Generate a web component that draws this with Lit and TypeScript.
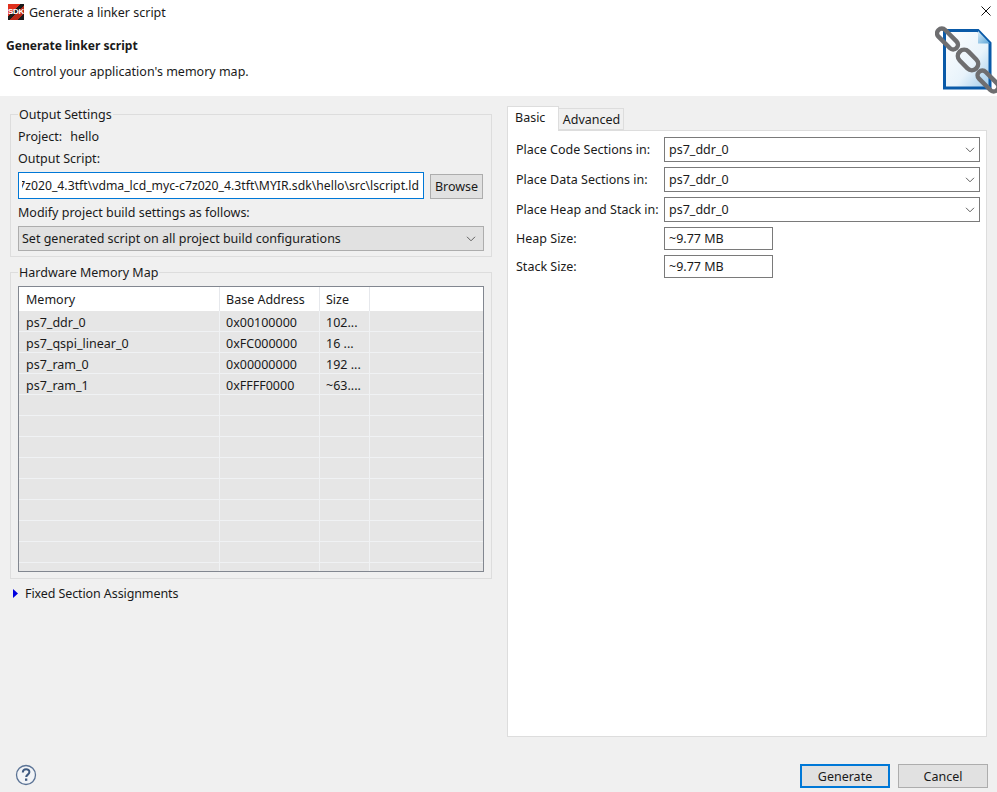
import { LitElement, html, css, svg } from 'lit';
import { customElement } from 'lit/decorators.js';

const MEMORY = [
  ['ps7_ddr_0', '0x00100000', '102...'],
  ['ps7_qspi_linear_0', '0xFC000000', '16 ...'],
  ['ps7_ram_0', '0x00000000', '192 ...'],
  ['ps7_ram_1', '0xFFFF0000', '~63....'],
  ['', '', ''], ['', '', ''], ['', '', ''], ['', '', ''],
  ['', '', ''], ['', '', ''], ['', '', ''], ['', '', ''], ['', '', ''],
];

const chevron = svg`<svg class="chev" width="10" height="6" viewBox="0 0 10 6" fill="none" stroke="#606060" stroke-width="1"><path d="M1 .8l4 4 4-4"/></svg>`;

const link = (cx: number, cy: number, w: number, h: number) => svg`<rect x=${cx - w / 2} y=${cy - h / 2} width=${w} height=${h} rx=${h / 2} transform="rotate(45 ${cx} ${cy})" fill="none" stroke="#6e6e70" stroke-width="4.500"/>`;

@customElement('app-root')
export class AppRoot extends LitElement {
  static styles = css`
    :host {
      display: block;
      width: 997px;
      height: 792px;
      overflow: hidden;
      background: #f0f0f0;
      color: #1a1a1a;
      font: 12.5px/17px "Noto Sans", "Open Sans", sans-serif;
    }

    .top { background: #fff; height: 96px; display: flex; flex-direction: column; position: relative; }

    .titlebar { display: flex; align-items: center; height: 24px; padding-left: 8px; gap: 5px; }
    .sdk {
      width: 16px; height: 16px;
      background: linear-gradient(135deg, #e0301c 0 40%, #1a1a1a 40% 55%, #b82818 55% 80%, #1a1a1a 80%);
      color: #fff; font: bold 8px/16px "Liberation Sans", sans-serif; letter-spacing: -0.3px; text-align: center; overflow: hidden;
    }
    .close { position: absolute; right: 6px; top: 6px; }

    .heading { font-weight: 700; font-size: 12.1px; margin: 13px 0 0 6px; }
    .sub { margin: 9px 0 0 13px; }
    .logo { position: absolute; left: 935px; top: 25px; }

    .body { display: flex; height: 668px; box-sizing: border-box; padding: 10px 10px 0; gap: 15px; }
    .left { width: 482px; flex: none; }
    .right { width: 480px; flex: none; display: flex; flex-direction: column; }

    fieldset { margin: 0; padding: 0 7px; border: 1px solid #dddddd; min-width: 0; box-sizing: border-box; }
    legend { padding: 0 1px; margin-left: 0; line-height: 17px; }
    .output { height: 151px; }
    .hw { height: 315px; margin-top: 7px; }

    .project { display: flex; gap: 8px; margin-top: 5px; }
    .lbl { margin-top: 5px; }
    .script-row { display: flex; gap: 6px; margin-top: 5px; align-items: center; }
    .input {
      box-sizing: border-box; width: 406px; height: 27px; background: #fff; font-size: 12.22px;
      border: 1px solid #0078d7; line-height: 25px; padding: 0 4px 0 3px;
    }
    .input-clip { display: flex; justify-content: flex-end; white-space: nowrap; overflow: hidden; }
    .input-clip span { flex: none; }
    .btn { box-sizing: border-box; background: #e1e1e1; border: 1px solid #adadad; text-align: center; }
    .browse { width: 53px; height: 25px; line-height: 23px; margin-top: 1px; }
    .combo-gray {
      box-sizing: border-box; height: 25px; margin-top: 5px; padding: 0 3px; background: #e1e1e1;
      border: 1px solid #adadad; line-height: 23px; display: flex; justify-content: space-between; align-items: center;
    }
    .chev { margin-right: 4px; flex: none; }

    .table {
      box-sizing: border-box; height: 286px; margin-top: 5px; background: #e6e6e6; overflow: hidden;
      border: 1px solid #828790;
    }
    .tr { display: grid; grid-template-columns: 201px 100px 50px 1fr; height: 21px; border-bottom: 1px solid #f0f2f4; box-sizing: border-box; line-height: 23px; }
    .tr.head { height: 24px; background: #fff; border: none; line-height: 25px; }
    .tr > div { padding-left: 7px; border-right: 1px solid #f0f2f4; white-space: nowrap; overflow: hidden; }
    .tr > div + div { padding-left: 6px; }
    .tr > div:last-child { border-right: none; }
    .tr.head > div { border-right-color: #e6e8ec; }

    .fixed { display: flex; align-items: center; gap: 7px; margin: 6px 0 0 3px; letter-spacing: -0.1px; }

    .tabs { display: flex; height: 24px; align-items: flex-end; position: relative; z-index: 1; }
    .tab { box-sizing: border-box; }
    .tab.on { width: 52px; height: 25px; background: #fff; border: 1px solid #dddddd; border-bottom: none; line-height: 22px; margin-bottom: -1px; padding-left: 7px; }
    .tab.off { width: 65px; height: 22px; background: #f0f0f0; border: 1px solid #dddddd; border-left: none; line-height: 21px; text-align: center; padding-left: 1px; }
    .pane { box-sizing: border-box; height: 607px; background: #fff; border: 1px solid #dddddd; padding: 6px 6px 0 8px; }

    .form { display: grid; grid-template-columns: 148px 316px; row-gap: 5px; align-items: center; }
    .form .combo, .form .field { box-sizing: border-box; border: 1px solid #7a7a7a; padding-left: 4px; background: #fff; }
    .combo { height: 25px; line-height: 23px; display: flex; justify-content: space-between; align-items: center; }
    .field { width: 109px; height: 23px; line-height: 21px; }

    .bottom { position: relative; display: flex; justify-content: flex-end; gap: 8px; padding: 0 9px 0 0; align-items: flex-start; }
    .help { position: absolute; left: 15px; top: 0; }
    .action { width: 90px; height: 24px; line-height: 24px; }
    .action.default { border: 2px solid #0078d7; line-height: 22px; }
  `;

  render() {
    return html`
      <div class="top">
        <div class="titlebar"><div class="sdk">SDK</div><span>Generate a linker script</span></div>
        <svg class="close" width="10" height="10" viewBox="0 0 10 10" stroke="#111" stroke-width="1"><path d="M.5.5l9 9M9.500.5l-9 9"/></svg>
        <div class="heading">Generate linker script</div>
        <div class="sub">Control your application's memory map.</div>
        <svg class="logo" width="62" height="71" viewBox="0 0 62 71">
          <defs>
            <linearGradient id="page" x1="0" y1="0" x2="1" y2="1">
              <stop offset="0" stop-color="#ffffff" /><stop offset=".6" stop-color="#e8f3fb" /><stop offset="1" stop-color="#9cc9ea" />
            </linearGradient>
            <linearGradient id="fold" x1="0" y1="0" x2="1" y2="1">
              <stop offset="0" stop-color="#d8ebf7" /><stop offset="1" stop-color="#5aa5d8" />
            </linearGradient>
          </defs>
          <path d="M9.500 5.500H43l12 12.500v45H9.500z" fill="url(#page)" stroke="#0a5aa8" stroke-width="3"/>
          <path d="M43 6l12 12.500H43z" fill="url(#fold)"/>
          ${link(12.5, 14, 25.5, 9.5)}${link(33, 35, 23.5, 12.5)}${link(53, 56, 25.5, 9.5)}
        </svg>
      </div>

      <div class="body">
        <div class="left">
          <fieldset class="output">
            <legend>Output Settings</legend>
            <div class="project"><span>Project:</span><span>hello</span></div>
            <div class="lbl">Output Script:</div>
            <div class="script-row">
              <div class="input"><div class="input-clip"><span>7z020_4.3tft\\vdma_lcd_myc-c7z020_4.3tft\\MYIR.sdk\\hello\\src\\lscript.ld</span></div></div>
              <div class="btn browse">Browse</div>
            </div>
            <div class="lbl">Modify project build settings as follows:</div>
            <div class="combo-gray"><span>Set generated script on all project build configurations</span>${chevron}</div>
          </fieldset>

          <fieldset class="hw">
            <legend>Hardware Memory Map</legend>
            <div class="table">
              <div class="tr head"><div>Memory</div><div>Base Address</div><div>Size</div><div></div></div>
              ${MEMORY.map((r) => html`<div class="tr"><div>${r[0]}</div><div>${r[1]}</div><div>${r[2]}</div><div></div></div>`)}
            </div>
          </fieldset>

          <div class="fixed">
            <svg width="5" height="9" viewBox="0 0 5 9"><path d="M0 0l5 4.500-5 4.500z" fill="#0000e0"/></svg>
            <span>Fixed Section Assignments</span>
          </div>
        </div>

        <div class="right">
          <div class="tabs"><div class="tab on">Basic</div><div class="tab off">Advanced</div></div>
          <div class="pane">
            <div class="form">
              <span>Place Code Sections in:</span><div class="combo"><span>ps7_ddr_0</span>${chevron}</div>
              <span>Place Data Sections in:</span><div class="combo"><span>ps7_ddr_0</span>${chevron}</div>
              <span>Place Heap and Stack in:</span><div class="combo"><span>ps7_ddr_0</span>${chevron}</div>
              <span>Heap Size:</span><div class="field">~9.77 MB</div>
              <span>Stack Size:</span><div class="field">~9.77 MB</div>
            </div>
          </div>
        </div>
      </div>

      <div class="bottom">
        <svg class="help" width="22" height="22" viewBox="0 0 22 22">
          <circle cx="11" cy="11" r="9.500" fill="#f2f4f7" stroke="#5b7395" stroke-width="1.300"/>
          <path d="M7.800 8.500c0-4.300 6.600-4.300 6.600-.4 0 2.500-3.200 2.500-3.200 5" fill="none" stroke="#3f5a80" stroke-width="2"/>
          <rect x="10" y="14.500" width="2.300" height="2.300" fill="#3f5a80"/>
        </svg>
        <div class="btn action default">Generate</div>
        <div class="btn action">Cancel</div>
      </div>
    `;
  }
}
